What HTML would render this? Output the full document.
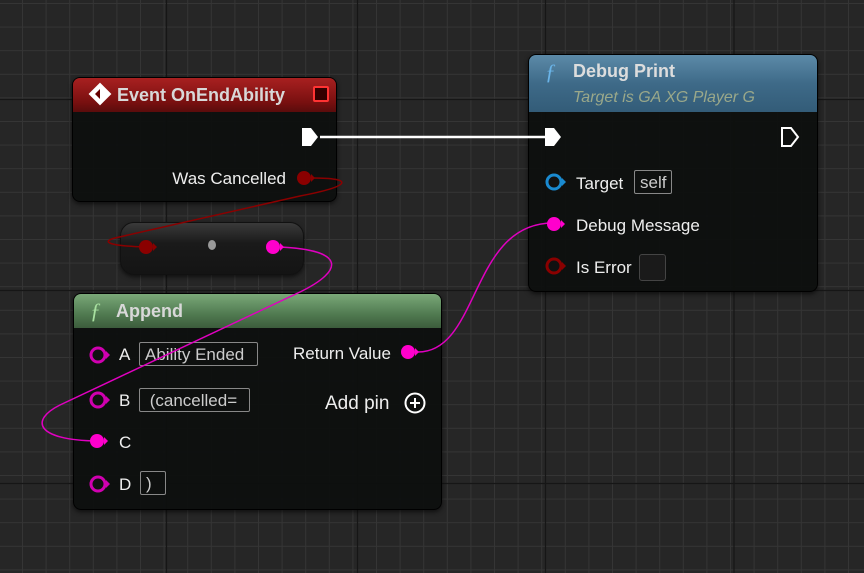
<!DOCTYPE html>
<html><head><meta charset="utf-8"><style>
body{margin:0;width:864px;height:573px;overflow:hidden;background:#262626;font-family:"Liberation Sans",sans-serif;position:relative}
.node{position:absolute;background:rgba(14,16,15,0.96);border:1px solid #000;border-radius:8px;box-shadow:0 2px 5px rgba(0,0,0,.6);overflow:hidden}
.hdr{height:34px;color:#d8d8d8;font-weight:bold;font-size:18px;display:flex;align-items:center}
.t{position:absolute;color:#eee;font-size:17px;white-space:nowrap}
.box{position:absolute;border:1.5px solid #888;border-radius:2px;color:#ccc;font-size:17px;padding:0 5px;height:24px;line-height:24px;box-sizing:border-box}
svg{position:absolute;left:0;top:0}
</style></head><body>
<svg width="864" height="573">
<defs><pattern id="g" x="22" y="3" width="23.6" height="23.6" patternUnits="userSpaceOnUse"><path d="M0 0.5H24M0.5 0V24" stroke="#353535" stroke-width="1" fill="none"/></pattern></defs>
<rect width="864" height="573" fill="#262626"/>
<rect width="864" height="573" fill="url(#g)"/>
<g stroke="#161616" stroke-width="1.2"><path d="M166.5 0V573M357.5 0V573M545.5 0V573M734 0V573M0 99.5H864M0 290.5H864M0 483.5H864"/></g>
</svg>

<div class="node" style="left:72px;top:77px;width:263px;height:123px">
<div class="hdr" style="background:linear-gradient(180deg,#a82020,#7a1010 70%,#5a0c0c);padding-left:44px">Event OnEndAbility</div>
<div style="position:absolute;right:7px;top:8px;width:12px;height:12px;border:2px solid #f33;background:#300;border-radius:2px"></div>
<div class="t" style="right:50px;top:91px">Was Cancelled</div>
</div>
<svg width="864" height="573" style="pointer-events:none">
<path d="M90 94 L100 84 L110 94 L100 104Z" fill="#fff" stroke="#fff" stroke-width="2"/><path d="M95 94 L100 89 L100 99Z" fill="#600"/>
</svg>

<div class="node" style="left:120px;top:222px;width:182px;height:51px;border-radius:14px;background:linear-gradient(180deg,#3a3a3a,#1a1a1a 40%,#141414);border-color:#111"></div>

<div class="node" style="left:528px;top:54px;width:288px;height:236px">
<div style="height:57px;background:linear-gradient(180deg,#5c8aa8,#3e6a88 50%,#335c78)"></div>
<div class="t" style="left:44px;top:6px;font-weight:bold;font-size:18px;color:#ddd">Debug Print</div>
<div class="t" style="left:44px;top:34px;font-style:italic;font-size:16px;color:#9aa88a">Target is GA XG Player G</div>
<div class="t" style="left:47px;top:119px">Target</div>
<div class="box" style="left:105px;top:115px">self</div>
<div class="t" style="left:47px;top:161px">Debug Message</div>
<div class="t" style="left:47px;top:203px">Is Error</div>
<div style="position:absolute;left:110px;top:199px;width:25px;height:25px;border:1.5px solid #444;border-radius:3px;background:#1a1a1a"></div>
</div>

<div class="node" style="left:73px;top:293px;width:367px;height:215px">
<div class="hdr" style="background:linear-gradient(180deg,#7aa878,#507a50 60%,#3c5c3c);padding-left:42px">Append</div>
<div class="t" style="left:45px;top:51px">A</div>
<div class="box" style="left:65px;top:48px;width:119px">Ability Ended</div>
<div class="t" style="left:45px;top:97px">B</div>
<div class="box" style="left:65px;top:94px;width:111px">&nbsp;(cancelled=</div>
<div class="t" style="left:45px;top:139px">C</div>
<div class="t" style="left:45px;top:181px">D</div>
<div class="box" style="left:66px;top:177px;width:26px">)</div>
<div class="t" style="left:219px;top:50px">Return Value</div>
<div class="t" style="left:251px;top:99px;font-size:19px">Add pin</div>
</div>

<svg width="864" height="573">
<g fill="none" stroke-width="1.5">
<path d="M320 137H548" stroke="#fff" stroke-width="2.5"/>
<path d="M312 178 C355 178 352 186 300 196 L115 238 C100 242 110 246 146 247" stroke="#8a0000"/>
<path d="M280 247 C345 250 345 270 300 292 L60 405 C30 420 35 440 97 441" stroke="#e000c0"/>
<path d="M418 352 C480 352 470 223 553 223" stroke="#e000c0"/>
</g>
<path d="M302 128h9l7 9-7 9h-9z" fill="#fff"/>
<path d="M545 128h9l7 9-7 9h-9z" fill="#fff"/>
<path d="M782 128h9l7 9-7 9h-9z" fill="none" stroke="#fff" stroke-width="2"/>
<g>
<circle cx="304" cy="178" r="7" fill="#8a0000"/><path d="M311 174l4 4-4 4z" fill="#8a0000"/>
<circle cx="146" cy="247" r="7" fill="#8a0000"/><path d="M153 243l4 4-4 4z" fill="#8a0000"/>
<ellipse cx="212" cy="245" rx="4" ry="5" fill="#999"/>
<circle cx="273" cy="247" r="7" fill="#f0c"/><path d="M280 243l4 4-4 4z" fill="#f0c"/>
<circle cx="554" cy="182" r="7" fill="#111" stroke="#1a8ad0" stroke-width="3"/><path d="M562 178l4 4-4 4z" fill="#1a8ad0"/>
<circle cx="554" cy="224" r="7" fill="#f0c"/><path d="M561 220l4 4-4 4z" fill="#f0c"/>
<circle cx="554" cy="266" r="7" fill="#111" stroke="#8a0000" stroke-width="3"/><path d="M562 262l4 4-4 4z" fill="#8a0000"/>
<circle cx="98" cy="355" r="7" fill="#111" stroke="#d000b0" stroke-width="3"/><path d="M106 351l4 4-4 4z" fill="#d000b0"/>
<circle cx="98" cy="400" r="7" fill="#111" stroke="#d000b0" stroke-width="3"/><path d="M106 396l4 4-4 4z" fill="#d000b0"/>
<circle cx="97" cy="441" r="7" fill="#f0c"/><path d="M104 437l4 4-4 4z" fill="#f0c"/>
<circle cx="98" cy="484" r="7" fill="#111" stroke="#d000b0" stroke-width="3"/><path d="M106 480l4 4-4 4z" fill="#d000b0"/>
<circle cx="408" cy="352" r="7" fill="#f0c"/><path d="M415 348l4 4-4 4z" fill="#f0c"/>
<circle cx="415" cy="403" r="9.5" fill="none" stroke="#fff" stroke-width="2"/><path d="M410 403h10M415 398v10" stroke="#fff" stroke-width="2"/>
</g>
<text x="545" y="79" fill="#6ab4e8" font-family="Liberation Serif" font-style="italic" font-size="22">ƒ</text>
<text x="90" y="318" fill="#a8e0a0" font-family="Liberation Serif" font-style="italic" font-size="22">ƒ</text>
</svg>
</body></html>
